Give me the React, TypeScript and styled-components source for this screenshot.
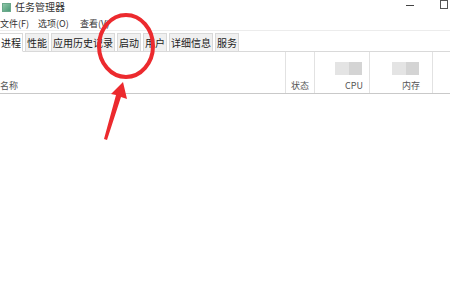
import styled, { createGlobalStyle } from "styled-components";

const GlobalStyle = createGlobalStyle`
  html, body {
    margin: 0;
    padding: 0;
    background: #ffffff;
  }
  body {
    font-family: "Noto Sans CJK SC", "Noto Sans", "Liberation Sans", sans-serif;
    color: #222;
  }
`;

const menus = [
  { label: "文件(F)", width: 38 },
  { label: "选项(O)", width: 42 },
  { label: "查看(V)", width: 40 },
];

const tabs = ["进程", "性能", "应用历史记录", "启动", "用户", "详细信息", "服务"];

const columns = [
  { label: "状态", width: 29, align: "flex-start", pr: 5, meter: false },
  { label: "CPU", width: 55, align: "flex-end", pr: 6, meter: true },
  { label: "内存", width: 63, align: "flex-end", pr: 12, meter: true },
];

const App = () => {
  return (
    <>
      <GlobalStyle />
      <Window>
        <TitleBar>
          <AppIcon />
          <Title>任务管理器</Title>
          <Controls>
            <MinButton />
            <MaxButton />
          </Controls>
        </TitleBar>
        <MenuBar>
          {menus.map((m) => (
            <MenuItem key={m.label} w={m.width}>
              {m.label}
            </MenuItem>
          ))}
        </MenuBar>
        <TabStrip>
          {tabs.map((t, i) => (
            <Tab key={t} active={i === 0}>
              {t}
            </Tab>
          ))}
        </TabStrip>
        <HeaderRow>
          <NameCol>名称</NameCol>
          {columns.map((c) => (
            <HeadCol key={c.label} w={c.width} align={c.align} pr={c.pr}>
              {c.meter && (
                <Meter>
                  <MeterPart tone="#e4e4e4" />
                  <MeterPart tone="#d4d4d4" />
                </Meter>
              )}
              <HeadLabel>{c.label}</HeadLabel>
            </HeadCol>
          ))}
          <RestCol />
        </HeaderRow>
        <Body />
        <Annotation width="450" height="281" viewBox="0 0 450 281">
          <ellipse
            cx="126"
            cy="46"
            rx="27"
            ry="31"
            fill="none"
            stroke="#ec2a2e"
            strokeWidth="4"
          />
          <polygon
            points="123,82 127,99 121,97 107,140 104,139 116,95 111,94"
            fill="#ec2a2e"
          />
        </Annotation>
      </Window>
    </>
  );
};

export default App;

const Window = styled.div`
  position: relative;
  width: 450px;
  height: 281px;
  overflow: hidden;
  display: flex;
  flex-direction: column;
`;

const TitleBar = styled.div`
  height: 14px;
  display: flex;
  align-items: center;
`;

const AppIcon = styled.div`
  width: 7px;
  height: 7px;
  margin-left: 2px;
  margin-right: 4px;
  background: linear-gradient(135deg, #8fc7a8, #4c9a78);
  border: 1px solid #6aa88a;
`;

const Title = styled.div`
  font-size: 10px;
  line-height: 12px;
  color: #333;
`;

const Controls = styled.div`
  margin-left: auto;
  display: flex;
  align-items: center;
  gap: 26px;
  padding-right: 2px;
  height: 14px;
`;

const MinButton = styled.div`
  width: 8px;
  height: 1px;
  background: #444;
  margin-top: -3px;
`;

const MaxButton = styled.div`
  width: 6px;
  height: 7px;
  border: 1px solid #555;
  margin-top: -5px;
`;

const MenuBar = styled.div`
  height: 13px;
  display: flex;
  align-items: center;
  padding-top: 3px;
  border-bottom: 1px solid #ececec;
`;

const MenuItem = styled.div<{ w: number }>`
  width: ${({ w }) => w}px;
  font-size: 9px;
  line-height: 12px;
  color: #333;
  white-space: nowrap;
`;

const TabStrip = styled.div`
  height: 20px;
  display: flex;
  align-items: flex-end;
  gap: 2px;
  border-bottom: 1px solid #d9d9d9;
`;

const Tab = styled.div<{ active: boolean }>`
  height: 17px;
  padding: 0 1px;
  display: flex;
  align-items: center;
  font-size: 10px;
  color: #222;
  background: ${({ active }) => (active ? "#ffffff" : "#f0f0f0")};
  border: 1px solid #d9d9d9;
  border-bottom: ${({ active }) => (active ? "1px solid #ffffff" : "none")};
  margin-bottom: ${({ active }) => (active ? "-1px" : "0")};
  white-space: nowrap;
  &:first-child {
    border-left: none;
    padding-left: 1px;
  }
`;

const HeaderRow = styled.div`
  height: 41px;
  display: flex;
  border-bottom: 1px solid #c9c9c9;
`;

const NameCol = styled.div`
  flex: 1;
  display: flex;
  align-items: flex-end;
  padding-bottom: 1px;
  font-size: 9px;
  line-height: 12px;
  color: #555;
  border-right: 1px solid #e2e2e2;
`;

const HeadCol = styled.div<{ w: number; align: string; pr: number }>`
  width: ${({ w }) => w}px;
  display: flex;
  flex-direction: column;
  align-items: ${({ align }) => align};
  justify-content: flex-end;
  padding: 0 ${({ pr }) => pr}px 1px 5px;
  box-sizing: border-box;
  border-right: 1px solid #e2e2e2;
`;

const Meter = styled.div`
  display: flex;
  width: 27px;
  height: 13px;
  margin-bottom: 5px;
  margin-right: 1px;
`;

const MeterPart = styled.div<{ tone: string }>`
  flex: 1;
  background: ${({ tone }) => tone};
`;

const HeadLabel = styled.div`
  font-size: 9px;
  color: #555;
  line-height: 12px;
`;

const RestCol = styled.div`
  width: 17px;
`;

const Body = styled.div`
  flex: 1;
`;

const Annotation = styled.svg`
  position: absolute;
  left: 0;
  top: 0;
  pointer-events: none;
`;
